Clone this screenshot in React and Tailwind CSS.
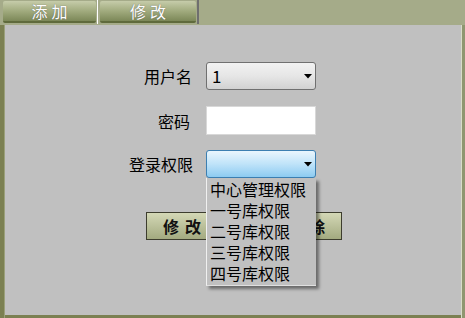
import React from "react";

const font = { fontFamily: '"Noto Sans CJK SC", "Liberation Sans", sans-serif' };

function Arrow() {
  return (
    <svg width="8" height="5" viewBox="0 0 8 5" className="ml-auto mr-[3px]">
      <polygon points="0,0 8,0 4,4.5" fill="#000" />
    </svg>
  );
}

export default function App() {
  return (
    <div className="w-[465px] h-[318px] bg-[#a5ab89] flex flex-col overflow-hidden" style={font}>
      <div className="h-[25px] flex items-start pl-[3px] shrink-0">
        <div className="mt-[1px] w-[93px] h-[22px] rounded-[2px] border-b-[2px] border-[#5f6a3c] bg-gradient-to-b from-[#c6ccaa] via-[#a1ab7e] to-[#7c8858] text-white text-[16px] leading-[20px] flex justify-center tracking-[4px] pl-[4px] [text-shadow:0_0_1px_#555]">
          添加
        </div>
        <div className="w-[1px] h-[24px] bg-white ml-[1px]" />
        <div className="ml-[2px] mt-[1px] w-[96px] h-[22px] rounded-[2px] border-b-[2px] border-[#5f6a3c] bg-gradient-to-b from-[#c6ccaa] via-[#a1ab7e] to-[#7c8858] text-white text-[16px] leading-[20px] flex justify-center tracking-[4px] pl-[4px] [text-shadow:0_0_1px_#555]">
          修改
        </div>
        <div className="w-[2px] h-[24px] bg-[#6f6f6f] ml-[1px]" />
      </div>
      <div className="flex-1 flex">
        <div className="w-[5px] bg-[#7b8052] border-r border-[#9aa07a]" />
        <div className="flex-1 flex flex-col">
          <div className="flex-1 bg-[#c0c0c0] relative flex flex-col pt-[37px] pl-[124px]">
            <div className="flex items-center h-[28px]">
              <div className="w-[64px] text-right text-[16px] text-black pr-[1px] whitespace-nowrap">用户名</div>
              <div className="ml-[13px] w-[110px] h-[28px] rounded-[3px] border border-[#707070] bg-gradient-to-b from-[#f2f2f2] via-[#e6e6e6] to-[#d2d2d2] flex items-center pl-[5px] text-[17px] text-black">
                1
                <Arrow />
              </div>
            </div>
            <div className="flex items-center h-[29px] mt-[16px]">
              <div className="w-[64px] text-right text-[16px] text-black pr-[3px] whitespace-nowrap">密码</div>
              <div className="ml-[13px] w-[110px] h-[29px] bg-white border border-[#d8d8d8]" />
            </div>
            <div className="flex items-center h-[28px] mt-[15px]">
              <div className="w-[64px] text-right text-[16px] text-black whitespace-nowrap">登录权限</div>
              <div className="ml-[13px] w-[110px] h-[28px] rounded-[3px] border border-[#3c7fb1] bg-gradient-to-b from-[#eaf6fd] via-[#bfe3f9] to-[#8ccbf1] flex items-center">
                <Arrow />
              </div>
            </div>
            <div className="flex mt-[34px] ml-[17px] gap-[52px]">
              <div className="w-[72px] h-[28px] border border-[#3d3d2e] bg-gradient-to-b from-[#d4d8b6] to-[#a3aa80] flex items-center justify-center text-[16px] font-bold text-[#111] tracking-[6px] pl-[6px]">
                修改
              </div>
              <div className="w-[72px] h-[28px] border border-[#3d3d2e] bg-gradient-to-b from-[#d4d8b6] to-[#a3aa80] flex items-center justify-center text-[16px] font-bold text-[#111] tracking-[6px] pl-[6px]">
                删除
              </div>
            </div>
            <div className="absolute left-[201px] top-[153px] w-[110px] bg-[#c0c0c0] border-l border-[#f0f0f0] border-b border-b-[#e0e0e0] shadow-[3px_3px_3px_rgba(0,0,0,0.45)] pl-[3px] pt-[1px] pb-[1px] text-[16px] leading-[21px] text-black">
              <div>中心管理权限</div>
              <div>一号库权限</div>
              <div>二号库权限</div>
              <div>三号库权限</div>
              <div>四号库权限</div>
            </div>
          </div>
          <div className="h-[3px] bg-[#7b8052]" />
        </div>
        <div className="w-[4px] flex">
          <div className="w-[1px] bg-[#d8dbc8]" />
          <div className="flex-1 bg-[#8f9670]" />
        </div>
      </div>
    </div>
  );
}
